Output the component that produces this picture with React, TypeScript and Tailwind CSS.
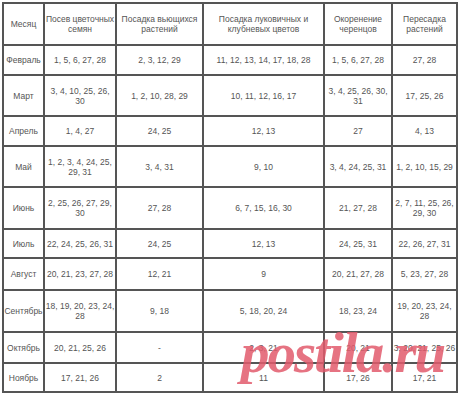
const headers = [
  "Месяц",
  "Посев цветочных\nсемян",
  "Посадка вьющихся\nрастений",
  "Посадка луковичных и\nклубневых цветов",
  "Окоренение\nчеренцов",
  "Пересадка\nрастений",
];

const rows: { h: string; cells: string[] }[] = [
  { h: "h-[28px]", cells: ["Февраль", "1, 5, 6, 27, 28", "2, 3, 12, 29", "11, 12, 13, 14, 17, 18, 28", "1, 5, 6, 27, 28", "27, 28"] },
  { h: "h-[39px]", cells: ["Март", "3, 4, 10, 25, 26,\n30", "1, 2, 10, 28, 29", "10, 11, 12, 16, 17", "3, 4, 25, 26, 30,\n31", "17, 25, 26"] },
  { h: "h-[28px]", cells: ["Апрель", "1, 4, 27", "24, 25", "12, 13", "27", "4, 13"] },
  { h: "h-[39px]", cells: ["Май", "1, 2, 3, 4, 24, 25,\n29, 31", "3, 4, 31", "9, 10", "3, 4, 24, 25, 31", "1, 2, 10, 15, 29"] },
  { h: "h-[40px]", cells: ["Июнь", "2, 25, 26, 27, 29,\n30", "27, 28", "6, 7, 15, 16, 30", "21, 27, 28", "2, 7, 11, 25, 26,\n29, 30"] },
  { h: "h-[27px]", cells: ["Июль", "22, 24, 25, 26, 31", "24, 25", "12, 13", "24, 25, 31", "22, 26, 27, 31"] },
  { h: "h-[30px]", cells: ["Август", "20, 21, 23, 27, 28", "12, 21", "9", "20, 21, 27, 28", "5, 23, 27, 28"] },
  { h: "h-[40px]", cells: ["Сентябрь", "18, 19, 20, 23, 24,\n28", "9, 18", "5, 18, 20, 24", "18, 23, 24", "19, 20, 23, 24,\n28"] },
  { h: "h-[29px]", cells: ["Октябрь", "20, 21, 25, 26", "-", "2, 3, 21", "20, 21", "3, 20, 21, 25, 26"] },
  { h: "h-[27px]", cells: ["Ноябрь", "17, 21, 26", "2", "11", "17, 26", "17, 21"] },
];

function Cell({ text, h }: { text: string; h: string }) {
  return (
    <div className={`${h} bg-white flex items-center justify-center text-center whitespace-pre leading-[10px] text-[#555]`}>
      {text}
    </div>
  );
}

export default function App() {
  return (
    <div className="relative w-[460px] h-[400px] bg-white overflow-hidden font-['Liberation_Sans',Arial,sans-serif] text-[8.5px]">
      <div className="absolute left-[2px] top-[2px] grid grid-cols-[39px_70px_85px_119px_66px_63px] gap-[2px] p-[2px] bg-[#555]">
        {headers.map((t, i) => (
          <Cell key={i} text={t} h="h-[40px]" />
        ))}
        {rows.map((r) =>
          r.cells.map((c, j) => <Cell key={r.cells[0] + j} text={c} h={r.h} />)
        )}
      </div>
      <div className="absolute left-[241px] top-[323px] font-['Liberation_Serif',serif] italic font-bold text-[57px] leading-[60px] tracking-[-2px] text-[#e25a6cd9] whitespace-nowrap">
        postila.ru
      </div>
    </div>
  );
}
